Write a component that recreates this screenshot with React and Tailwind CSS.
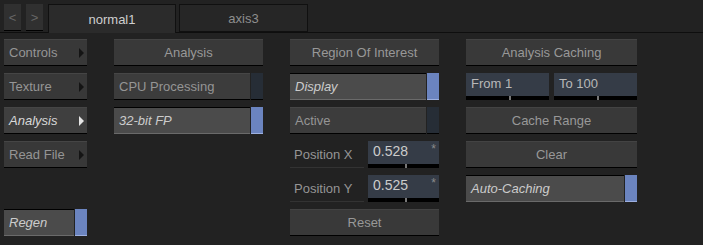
import React from "react";

const font = { fontFamily: '"Liberation Sans", Arial, sans-serif' };

function Tri({ light }) {
  return (
    <span
      className={`w-0 h-0 border-y-[5px] border-y-transparent border-l-[5px] ${
        light ? "border-l-[#e6e6e6]" : "border-l-[#141414]"
      }`}
    />
  );
}

function MenuBtn({ label, active }) {
  return (
    <div
      className={`h-[27px] flex items-center justify-between pl-[5px] pr-[3px] border-t border-t-[#454545] border-b border-b-black ${
        active ? "bg-[#3f3f3f] text-[#d8d8d8] italic" : "bg-[#383838] text-[#959595]"
      }`}
    >
      <span>{label}</span>
      <Tri light={active} />
    </div>
  );
}

function Btn({ label }) {
  return (
    <div className="h-[27px] flex items-center justify-center bg-[#393939] text-[#989898] border-t border-t-[#434343] border-b border-b-black">
      {label}
    </div>
  );
}

function Toggle({ label, on }) {
  return (
    <div className="h-[27px] flex gap-px">
      <div
        className={`flex-1 flex items-center pl-[5px] ${
          on
            ? "bg-[#4b4b4b] text-[#cccccc] italic border-t border-t-black border-b border-b-[#6a6a6a]"
            : "bg-[#3c3c3c] text-[#959595] border-t border-t-[#464646] border-b border-b-black"
        }`}
      >
        {label}
      </div>
      <div
        className={`w-[12px] ${
          on ? "bg-[#6b84bf] border-b border-b-[#9db0e0]" : "bg-[#262d36] border-b border-b-black"
        }`}
      />
    </div>
  );
}

function NumField({ value, star, big, className = "" }) {
  return (
    <div className={`h-[27px] flex flex-col bg-[#353c47] ${className}`}>
      <div
        className={`flex-1 flex items-start justify-between pl-[5px] pr-[3px] ${
          big ? "pt-[3px] text-[14px] text-[#cccccc]" : "pt-[4px] text-[#b8b8b8]"
        }`}
      >
        <span>{value}</span>
        {star && <span className="text-[#8a8a8a] text-[12px] leading-none mt-[-1px]">*</span>}
      </div>
      <div className="h-[4px] bg-black flex justify-center">
        <div className="w-[2px] h-[4px] bg-[#777777] ml-[4px]" />
      </div>
    </div>
  );
}

function PosRow({ label, value }) {
  return (
    <div className="h-[27px] flex gap-[4px]">
      <div className="w-[74px] flex items-center pl-[4px] text-[#959595] border-b border-b-[#333333]">
        {label}
      </div>
      <NumField value={value} star big className="flex-1" />
    </div>
  );
}

function Col({ children, w }) {
  return <div className={`flex flex-col gap-[7px] ${w}`}>{children}</div>;
}

export default function App() {
  return (
    <div className="w-[703px] h-[245px] bg-[#222222] text-[13px] leading-none overflow-hidden" style={font}>
      <div className="h-[33px] pt-[4px] pl-[4px] flex items-start border-b border-b-[#0e0e0e]">
        <div className="w-[17px] h-[27px] bg-[#303030] text-[#666666] flex items-center justify-center border-b border-b-black">&lt;</div>
        <div className="w-[17px] h-[27px] ml-[5px] bg-[#303030] text-[#666666] flex items-center justify-center border-b border-b-black">&gt;</div>
        <div className="w-[128px] h-[29px] ml-[5px] bg-[#2b2b2b] text-[#cfcfcf] flex items-center justify-center border border-[#101010] border-b-0 mb-[-1px]">
          normal1
        </div>
        <div className="w-[129px] h-[28px] ml-[3px] bg-[#262626] text-[#8e8e8e] flex items-center justify-center border border-[#101010]">
          axis3
        </div>
      </div>

      <div className="flex gap-[27px] pl-[4px] pt-[6px]">
        <Col w="w-[83px]">
          <MenuBtn label="Controls" />
          <MenuBtn label="Texture" />
          <MenuBtn label="Analysis" active />
          <MenuBtn label="Read File" />
          <div className="h-[27px]" />
          <Toggle label="Regen" on />
        </Col>
        <Col w="w-[149px]">
          <Btn label="Analysis" />
          <Toggle label="CPU Processing" />
          <Toggle label="32-bit FP" on />
        </Col>
        <Col w="w-[149px]">
          <Btn label="Region Of Interest" />
          <Toggle label="Display" on />
          <Toggle label="Active" />
          <PosRow label="Position X" value="0.528" />
          <PosRow label="Position Y" value="0.525" />
          <Btn label="Reset" />
        </Col>
        <Col w="w-[171px]">
          <Btn label="Analysis Caching" />
          <div className="flex gap-[5px]">
            <NumField value="From 1" className="flex-1" />
            <NumField value="To 100" className="flex-1" />
          </div>
          <Btn label="Cache Range" />
          <Btn label="Clear" />
          <Toggle label="Auto-Caching" on />
        </Col>
      </div>
    </div>
  );
}
